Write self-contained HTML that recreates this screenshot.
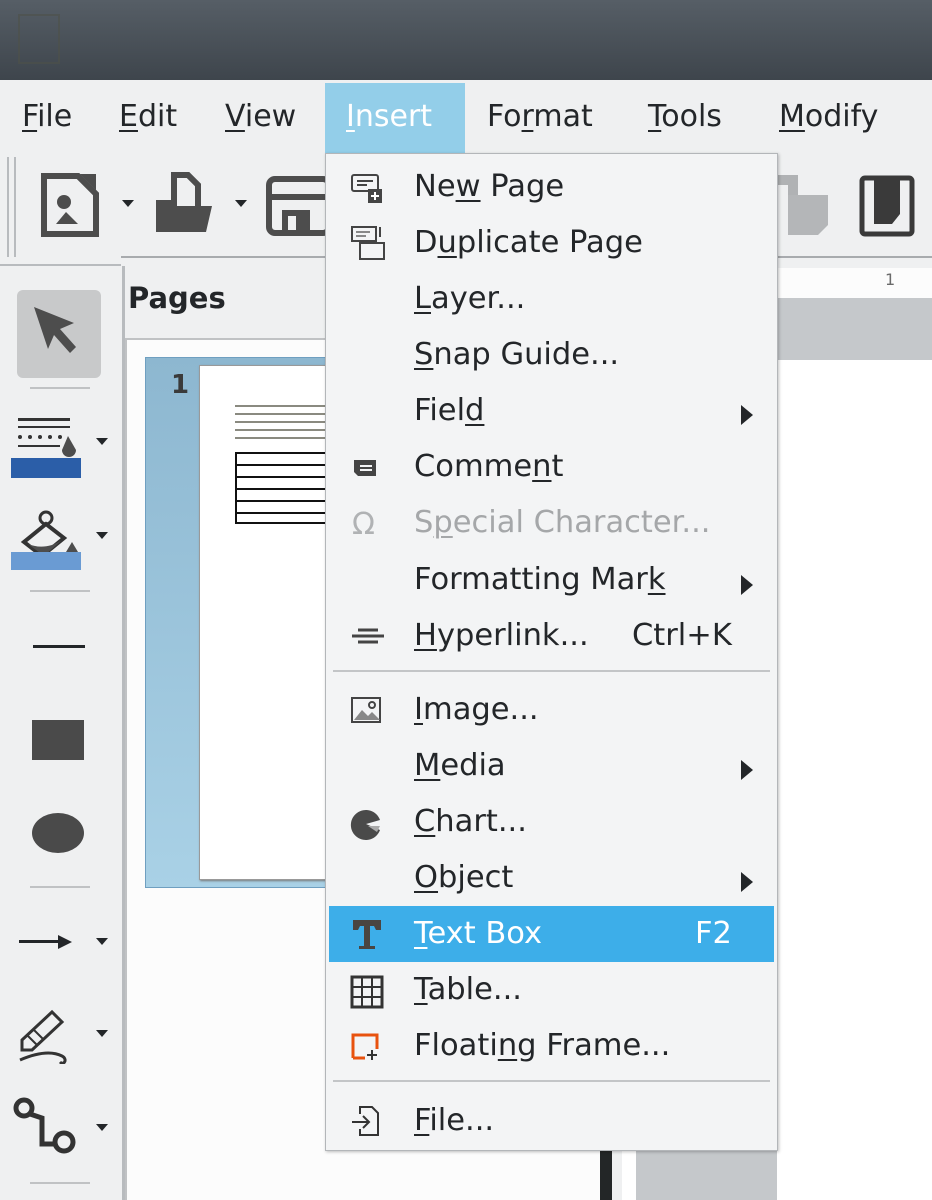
<!DOCTYPE html>
<html><head><meta charset="utf-8"><style>
*{margin:0;padding:0;box-sizing:border-box}
body{width:932px;height:1200px;overflow:hidden;background:#eff0f1;font-family:"DejaVu Sans","Liberation Sans",sans-serif;color:#232629;position:relative}
.a{position:absolute}
.t{position:absolute;font-size:30px;white-space:nowrap;line-height:1}
u{text-decoration:underline;text-decoration-thickness:2px;text-underline-offset:4px}
.mi{position:absolute;left:414px;font-size:30.5px;white-space:nowrap;line-height:1}
.arr{position:absolute;left:741px;width:0;height:0;border-left:12px solid #232629;border-top:10px solid transparent;border-bottom:10px solid transparent}
.ic{position:absolute;left:350px}
</style></head><body>
<div class="a" style="left:0;top:0;width:932px;height:80px;background:linear-gradient(#565e66,#3e454c)"></div>
<div class="a" style="left:18px;top:14px;width:42px;height:50px;border:2px solid #4f524a;opacity:.6"></div>
<div class="a" style="left:0;top:80px;width:932px;height:74px;background:#eff0f1"></div>
<div class="a" style="left:325px;top:83px;width:140px;height:71px;background:#93cee9"></div>
<div class="t" style="left:22px;top:102px"><u>F</u>ile</div>
<div class="t" style="left:119px;top:102px"><u>E</u>dit</div>
<div class="t" style="left:225px;top:102px"><u>V</u>iew</div>
<div class="t" style="left:346px;top:102px;color:#fff"><u>I</u>nsert</div>
<div class="t" style="left:487px;top:102px">Fo<u>r</u>mat</div>
<div class="t" style="left:648px;top:102px"><u>T</u>ools</div>
<div class="t" style="left:779px;top:102px"><u>M</u>odify</div>
<div class="a" style="left:7px;top:157px;width:2px;height:100px;background:#b8bbbe"></div>
<div class="a" style="left:14px;top:157px;width:2px;height:100px;background:#b8bbbe"></div>
<svg class="a" style="left:40px;top:172px" width="60" height="66" viewBox="0 0 60 66"><path d="M4 4h34l18 18v40H4z" fill="none" stroke="#4d4d4d" stroke-width="6"/><circle cx="24" cy="30" r="7" fill="#4d4d4d"/><path d="M16 52l10-12 12 12z" fill="#4d4d4d"/><path d="M40 2h16v16z" fill="#4d4d4d"/></svg>
<div class="a" style="left:122px;top:200px;border-top:7px solid #232629;border-left:6px solid transparent;border-right:6px solid transparent"></div>
<svg class="a" style="left:152px;top:172px" width="66" height="64" viewBox="0 0 66 64"><path d="M22 3h14l10 10v24H22z" fill="none" stroke="#4d4d4d" stroke-width="6"/><path d="M4 28h16v6h40l-6 26H4z" fill="#4d4d4d"/></svg>
<div class="a" style="left:235px;top:200px;border-top:7px solid #232629;border-left:6px solid transparent;border-right:6px solid transparent"></div>
<svg class="a" style="left:266px;top:176px" width="60" height="60" viewBox="0 0 60 60"><rect x="3" y="3" width="60" height="54" rx="6" fill="none" stroke="#4d4d4d" stroke-width="6"/><rect x="4" y="18" width="56" height="6" fill="#4d4d4d"/><rect x="16" y="34" width="28" height="24" fill="#4d4d4d"/><rect x="22" y="40" width="8" height="14" fill="#eff0f1"/></svg>
<svg class="a" style="left:778px;top:175px" width="60" height="60"><path d="M0 0h20v20h-10v-10h-10z" fill="#b0b2b4"/><path d="M10 20h40v30l-10 10h-30z" fill="#b4b6b8"/></svg>
<svg class="a" style="left:858px;top:172px" width="60" height="66" viewBox="0 0 60 66"><rect x="4" y="6" width="50" height="56" rx="3" fill="none" stroke="#3a3a3a" stroke-width="5"/><path d="M16 4h26v8H16z" fill="#3a3a3a"/><path d="M16 12h26v30l-8 10H16z" fill="#3a3a3a"/></svg>
<div class="a" style="left:121px;top:256px;width:811px;height:2px;background:#a8abae"></div>
<div class="a" style="left:0;top:264px;width:121px;height:2px;background:#b8bbbe"></div>
<div class="a" style="left:777px;top:258px;width:155px;height:42px;background:#eff0f1"></div>
<div class="a" style="left:777px;top:268px;width:155px;height:30px;background:#fcfcfc"></div>
<div class="t" style="left:885px;top:272px;font-size:16px;color:#6a6a6a">1</div>
<div class="a" style="left:777px;top:298px;width:155px;height:62px;background:#c5c8cb"></div>
<div class="a" style="left:777px;top:360px;width:155px;height:840px;background:#fff"></div>
<div class="a" style="left:122px;top:266px;width:3px;height:934px;background:#b8bbbe"></div>
<div class="a" style="left:17px;top:290px;width:84px;height:88px;background:#c8c9ca;border-radius:6px"></div>
<svg class="a" style="left:30px;top:303px" width="56" height="60"><path d="M4 4l40 16-14 6 16 18-6 6-16-18-6 14z" fill="#4d4d4d"/></svg>
<div class="a" style="left:30px;top:387px;width:60px;height:2px;background:#c0c2c4"></div>
<svg class="a" style="left:10px;top:412px" width="76" height="68"><rect x="8" y="6" width="52" height="3" fill="#333"/><rect x="8" y="14" width="52" height="2" fill="#333"/><g fill="#333"><circle cx="10" cy="25" r="2"/><circle cx="20" cy="25" r="2"/><circle cx="30" cy="25" r="2"/><circle cx="40" cy="25" r="2"/><circle cx="50" cy="25" r="2"/></g><rect x="8" y="33" width="42" height="2" fill="#333"/><path d="M58 24l8 14a7 7 0 0 1-14 0z" fill="#4d4d4d"/><rect x="1" y="46" width="70" height="20" fill="#2b5ea8"/></svg>
<div class="a" style="left:96px;top:438px;border-top:7px solid #232629;border-left:6px solid transparent;border-right:6px solid transparent"></div>
<svg class="a" style="left:10px;top:508px" width="76" height="64"><circle cx="36" cy="10" r="6" fill="none" stroke="#333" stroke-width="3"/><path d="M36 16l-22 18 18 14 22-18z" fill="none" stroke="#333" stroke-width="4"/><path d="M18 36c10 4 22 4 34-4l-18 16z" fill="#4d4d4d"/><path d="M62 34l6 10h-12z" fill="#4d4d4d"/><rect x="1" y="44" width="70" height="18" fill="#6a9bd3"/></svg>
<div class="a" style="left:96px;top:532px;border-top:7px solid #232629;border-left:6px solid transparent;border-right:6px solid transparent"></div>
<div class="a" style="left:30px;top:590px;width:60px;height:2px;background:#c0c2c4"></div>
<div class="a" style="left:33px;top:645px;width:52px;height:3px;background:#232629"></div>
<div class="a" style="left:32px;top:720px;width:52px;height:40px;background:#4a4a4a"></div>
<div class="a" style="left:32px;top:813px;width:52px;height:40px;background:#4a4a4a;border-radius:50%"></div>
<div class="a" style="left:30px;top:886px;width:60px;height:2px;background:#c0c2c4"></div>
<svg class="a" style="left:18px;top:932px" width="56" height="20"><rect x="1" y="8" width="42" height="3" fill="#232629"/><path d="M40 3l14 7-14 7z" fill="#232629"/></svg>
<div class="a" style="left:96px;top:938px;border-top:7px solid #232629;border-left:6px solid transparent;border-right:6px solid transparent"></div>
<svg class="a" style="left:16px;top:1008px" width="60" height="56"><path d="M6 32l30-28 10 10-30 28H6z" fill="none" stroke="#333" stroke-width="3"/><path d="M12 28l10 10M18 22l10 10" stroke="#333" stroke-width="2"/><path d="M4 52c14-6 30-10 42-4 6 3 2 10-2 6" fill="none" stroke="#333" stroke-width="3"/></svg>
<div class="a" style="left:96px;top:1030px;border-top:7px solid #232629;border-left:6px solid transparent;border-right:6px solid transparent"></div>
<svg class="a" style="left:12px;top:1096px" width="66" height="66"><circle cx="12" cy="12" r="8" fill="none" stroke="#333" stroke-width="5"/><circle cx="52" cy="46" r="9" fill="none" stroke="#333" stroke-width="5"/><path d="M18 18l12 4v26h14" fill="none" stroke="#333" stroke-width="5"/></svg>
<div class="a" style="left:96px;top:1124px;border-top:7px solid #232629;border-left:6px solid transparent;border-right:6px solid transparent"></div>
<div class="a" style="left:30px;top:1182px;width:60px;height:2px;background:#c0c2c4"></div>
<div class="t" style="left:128px;top:284px;font-weight:bold;font-size:29px">Pages</div>
<div class="a" style="left:125px;top:338px;width:205px;height:862px;background:#fcfcfc;border-left:2px solid #c0c2c4;border-top:2px solid #c0c2c4"></div>
<div class="a" style="left:326px;top:1140px;width:274px;height:60px;background:#fcfcfc"></div>
<div class="a" style="left:145px;top:357px;width:185px;height:531px;background:linear-gradient(#8db7d0,#a9d1e6);border:1px solid #6f9fc0"></div>
<div class="t" style="left:171px;top:372px;font-weight:bold;font-size:26px;color:#3a3a3a">1</div>
<div class="a" style="left:199px;top:365px;width:131px;height:515px;background:#fff;border:1px solid #999;box-shadow:1px 1px 2px #777"></div>
<div class="a" style="left:235px;top:402px;width:95px;height:40px;background:repeating-linear-gradient(#fff 0,#fff 3px,#8a8a80 3px,#8a8a80 5px,#fff 5px,#fff 8px)"></div>
<div class="a" style="left:235px;top:452px;width:95px;height:72px;border:2px solid #111;background:repeating-linear-gradient(#fff 0,#fff 10px,#111 10px,#111 12px)"></div>
<div class="a" style="left:600px;top:1150px;width:12px;height:50px;background:#232627"></div>
<div class="a" style="left:622px;top:1150px;width:14px;height:50px;background:#fff"></div>
<div class="a" style="left:636px;top:1150px;width:141px;height:50px;background:#c5c8cb"></div>
<div class="a" style="left:325px;top:153px;width:453px;height:998px;background:#f3f4f5;border:1px solid #b3b6b9;box-shadow:1px 1px 3px rgba(0,0,0,.25)"></div>
<div class="a" style="left:329px;top:906px;width:445px;height:56px;background:#3daee9"></div>
<div class="a" style="left:333px;top:670px;width:437px;height:2px;background:#c3c5c7"></div>
<div class="a" style="left:333px;top:1080px;width:437px;height:2px;background:#c3c5c7"></div>
<div class="mi" style="top:172px">Ne<u>w</u> Page</div>
<div class="mi" style="top:228px">D<u>u</u>plicate Page</div>
<div class="mi" style="top:284px"><u>L</u>ayer...</div>
<div class="mi" style="top:340px"><u>S</u>nap Guide...</div>
<div class="mi" style="top:396px">Fiel<u>d</u></div>
<div class="mi" style="top:452px">Comme<u>n</u>t</div>
<div class="mi" style="top:508px;color:#a5a7a9">S<u>p</u>ecial Character...</div>
<div class="mi" style="top:565px">Formatting Mar<u>k</u></div>
<div class="mi" style="top:621px"><u>H</u>yperlink...</div>
<div class="mi" style="top:621px;left:632px">Ctrl+K</div>
<div class="mi" style="top:695px"><u>I</u>mage...</div>
<div class="mi" style="top:751px"><u>M</u>edia</div>
<div class="mi" style="top:807px"><u>C</u>hart...</div>
<div class="mi" style="top:863px"><u>O</u>bject</div>
<div class="mi" style="top:919px;color:#fff"><u>T</u>ext Box</div>
<div class="mi" style="top:919px;left:695px;color:#fff">F2</div>
<div class="mi" style="top:975px"><u>T</u>able...</div>
<div class="mi" style="top:1031px">Floati<u>n</u>g Frame...</div>
<div class="mi" style="top:1106px"><u>F</u>ile...</div>
<div class="arr" style="top:405px"></div>
<div class="arr" style="top:575px"></div>
<div class="arr" style="top:760px"></div>
<div class="arr" style="top:872px"></div>
<svg class="ic" style="top:173px" width="36" height="32"><rect x="2" y="2" width="26" height="16" rx="2" fill="none" stroke="#444" stroke-width="2"/><path d="M7 8h16M7 12h10" stroke="#444" stroke-width="2"/><rect x="18" y="16" width="14" height="14" fill="#444"/><path d="M25 19v8M21 23h8" stroke="#fff" stroke-width="2"/></svg>
<svg class="ic" style="top:225px" width="36" height="36"><rect x="2" y="2" width="24" height="14" fill="none" stroke="#444" stroke-width="2"/><path d="M6 7h14M6 11h10" stroke="#888" stroke-width="2"/><rect x="10" y="18" width="24" height="16" fill="none" stroke="#444" stroke-width="2"/><path d="M30 2v10" stroke="#444" stroke-width="2"/></svg>
<svg class="ic" style="top:456px" width="30" height="24"><path d="M4 4h22v16H8l-4-4z" fill="#444"/><path d="M10 10h12M10 14h12" stroke="#f3f4f5" stroke-width="2"/></svg>
<div class="t" style="left:352px;top:510px;color:#b0b2b4">Ω</div>
<svg class="ic" style="top:626px" width="36" height="20"><path d="M2 10h32M8 4h20M8 16h20" stroke="#444" stroke-width="3"/></svg>
<svg class="ic" style="top:696px" width="34" height="28"><rect x="2" y="2" width="28" height="24" fill="none" stroke="#444" stroke-width="2"/><path d="M4 24l8-10 6 6 4-4 8 8z" fill="#888"/><circle cx="22" cy="9" r="3" fill="none" stroke="#444" stroke-width="2"/></svg>
<svg class="ic" style="top:808px" width="32" height="32"><path d="M16 16L30 12A15 15 0 1 0 30 22z" fill="#4a4a4a"/><path d="M18 18h12l-3 6z" fill="#aaa"/></svg>
<svg class="ic" style="top:917px" width="34" height="34"><path d="M3 3h28v10h-5l-2-4h-4v20h5v3H9v-3h5V9h-4l-2 4H3z" fill="#4a4540"/></svg>
<svg class="ic" style="top:975px" width="36" height="36"><rect x="2" y="2" width="30" height="30" fill="none" stroke="#333" stroke-width="3"/><path d="M12 2v30M22 2v30M2 12h30M2 22h30" stroke="#333" stroke-width="2"/></svg>
<svg class="ic" style="top:1032px" width="32" height="30"><path d="M3 26V3h24v14M3 26h12" fill="none" stroke="#e8520e" stroke-width="3"/><path d="M22 18v10M17 23h10" stroke="#333" stroke-width="2"/></svg>
<svg class="ic" style="top:1104px" width="32" height="34"><path d="M10 10V3h12l6 6v22H10v-6" fill="none" stroke="#333" stroke-width="2"/><path d="M2 18h16M13 12l6 6-6 6" fill="none" stroke="#333" stroke-width="2"/></svg>
</body></html>
